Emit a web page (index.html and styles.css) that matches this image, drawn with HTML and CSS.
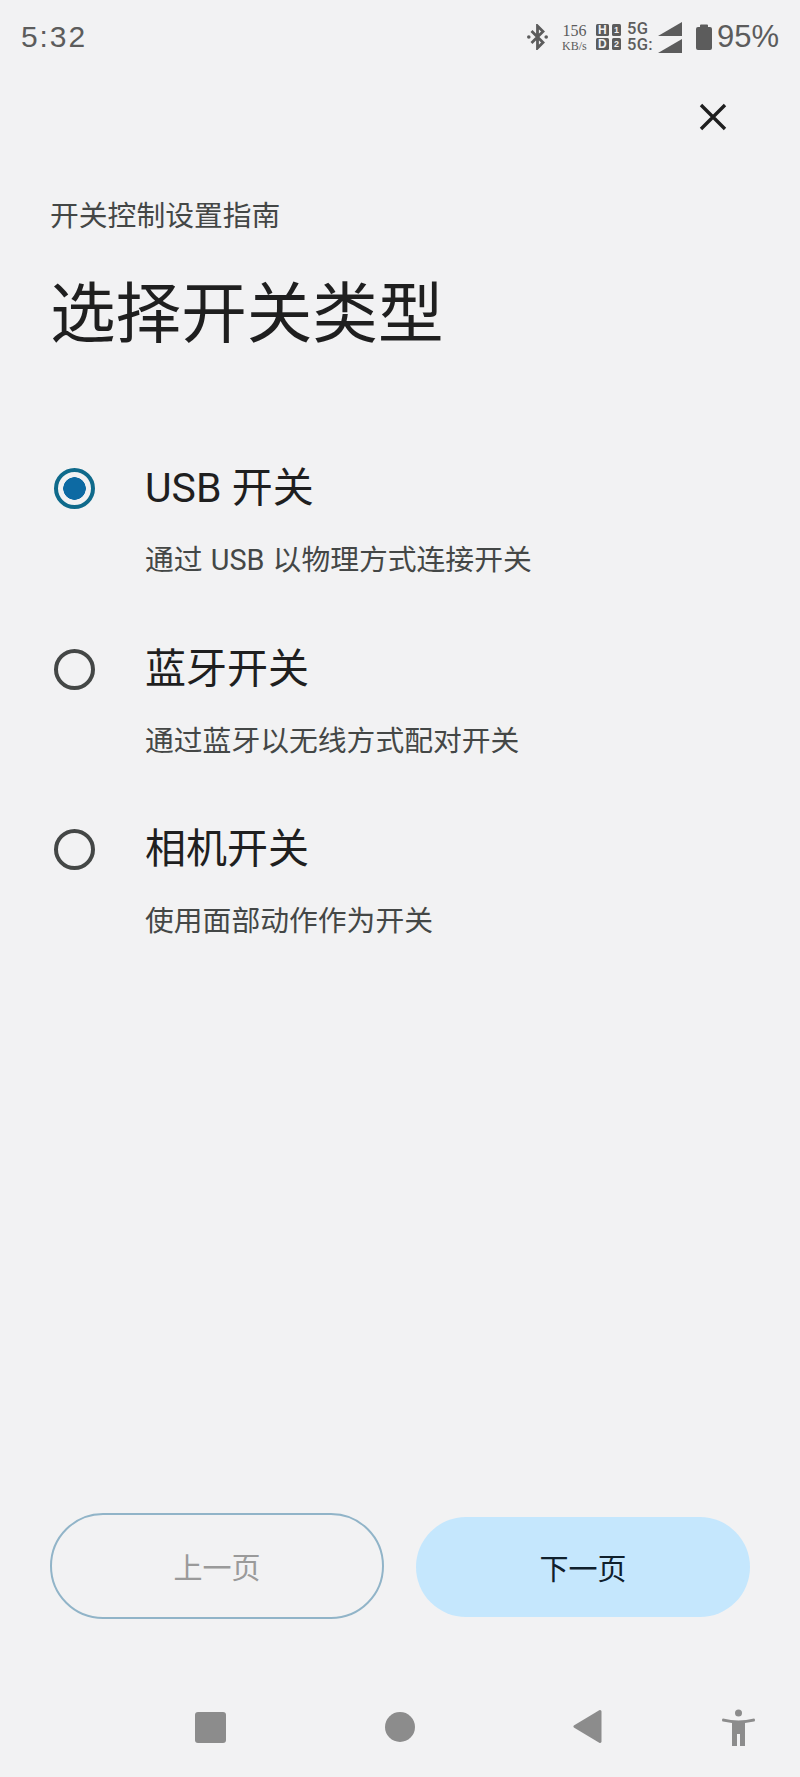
FILE: index.html
```html
<!DOCTYPE html>
<html lang="zh-CN">
<head>
<meta charset="utf-8">
<title>开关控制设置指南</title>
<link rel="stylesheet" href="styles.css">
</head>
<body>
<div class="page">
  <header class="status">
    <span class="time">5:32</span>
    <div class="status-icons">
      <svg class="bt" viewBox="0 0 21 26"><path d="M4.500 7L16 18.500 10.500 24V2L16 7.500 4.500 19" stroke="#5c5c5c" stroke-width="2.800" fill="none"/><circle cx="1.800" cy="13" r="1.800" fill="#5c5c5c"/><circle cx="19.200" cy="13" r="1.800" fill="#5c5c5c"/></svg>
      <div class="speed"><span class="speed-num">156</span><span class="speed-unit">KB/s</span></div>
      <div class="sim">
        <span class="sim-box">H</span><span class="sim-box sim-small">1</span>
        <span class="sim-box">D</span><span class="sim-box sim-small">2</span>
      </div>
      <div class="net"><span>5G</span><span>5G:</span></div>
      <div class="signal">
        <svg viewBox="0 0 24 14"><path d="M0 14L24 0v14z" fill="#5c5c5c"/></svg>
        <svg viewBox="0 0 24 14"><path d="M0 14L24 0v14z" fill="#5c5c5c"/></svg>
      </div>
      <svg class="battery" viewBox="0 0 16 26"><path d="M4 3V1.500Q4 .5 5 .5h6q1 0 1 1V3h2q2 0 2 2v19q0 2-2 2H2q-2 0-2-2V5q0-2 2-2z" fill="#5c5c5c"/></svg>
      <span class="pct">95%</span>
    </div>
  </header>

  <div class="close-row">
    <svg class="close" viewBox="0 0 30 30"><path d="M3 3l24 24M27 3L3 27" stroke="#1f1f1f" stroke-width="3.400" fill="none"/></svg>
  </div>

  <main class="content">
    <p class="eyebrow">开关控制设置指南</p>
    <h1 class="title">选择开关类型</h1>
    <ul class="options">
      <li class="option">
        <span class="radio radio-on"></span>
        <div class="option-text">
          <span class="option-name">USB 开关</span>
          <span class="option-desc">通过 USB 以物理方式连接开关</span>
        </div>
      </li>
      <li class="option">
        <span class="radio"></span>
        <div class="option-text">
          <span class="option-name">蓝牙开关</span>
          <span class="option-desc">通过蓝牙以无线方式配对开关</span>
        </div>
      </li>
      <li class="option">
        <span class="radio"></span>
        <div class="option-text">
          <span class="option-name">相机开关</span>
          <span class="option-desc">使用面部动作作为开关</span>
        </div>
      </li>
    </ul>
  </main>

  <div class="actions">
    <button class="btn btn-prev" type="button">上一页</button>
    <button class="btn btn-next" type="button">下一页</button>
  </div>

  <nav class="navbar">
    <span class="nav-square"></span>
    <span class="nav-circle"></span>
    <svg class="nav-back" viewBox="0 0 30 35"><path d="M27 2.500L2 17.500 27 32.500z" fill="#8c8c8c" stroke="#8c8c8c" stroke-width="3" stroke-linejoin="round"/></svg>
    <svg class="nav-a11y" viewBox="0 0 33 37"><circle cx="16.500" cy="4" r="3.500" fill="#8c8c8c"/><path d="M1 9.500Q0 9.500 0 11t1 1.500l9 1.500V37h5V25h3v12h5V14l9-1.500q1 0 1-1.500t-1-1.500Q24 11.500 16.500 11.500T1 9.500z" fill="#8c8c8c"/></svg>
  </nav>
</div>
</body>
</html>
```
FILE: styles.css
```css
* { box-sizing: border-box; }
html, body { margin: 0; padding: 0; }
body {
  background: #f2f2f3;
  font-family: "Roboto", "Noto Sans CJK SC", sans-serif;
  color: #1f1f1f;
}
.page {
  width: 800px;
  height: 1777px;
  display: flex;
  flex-direction: column;
}
.status {
  height: 76px;
  padding: 21px 21px 0 21px;
  display: flex;
  justify-content: space-between;
  align-items: flex-start;
  color: #5c5c5c;
}
.time {
  font-family: "Liberation Sans", sans-serif;
  font-size: 30px;
  line-height: 32px;
  letter-spacing: 1.900px;
}
.status-icons {
  display: flex;
  align-items: center;
  height: 32px;
}
.bt { width: 21px; height: 26px; margin-right: 13px; }
.speed {
  display: flex;
  flex-direction: column;
  font-family: "Liberation Serif", serif;
  align-items: center;
  margin-right: 8px;
  width: 27px;
}
.speed-num { font-size: 16px; line-height: 17px; }
.speed-unit { font-size: 12px; line-height: 14px; }
.sim {
  display: grid;
  grid-template-columns: 13px 9px;
  grid-template-rows: 12px 12px;
  gap: 2px 3px;
  margin-right: 6px;
}
.sim-box {
  background: #5c5c5c;
  color: #f2f2f3;
  font-family: "Liberation Sans", sans-serif;
  font-size: 12px;
  font-weight: 700;
  line-height: 12px;
  text-align: center;
  border-radius: 1.500px;
}
.sim-small { font-size: 9px; }
.net {
  display: flex;
  flex-direction: column;
  font-family: "Roboto", sans-serif;
  font-size: 16.500px;
  line-height: 16px;
  letter-spacing: 0.300px;
  width: 32px;
  margin-right: -1px;
  white-space: nowrap;
  font-weight: 500;
}
.signal {
  display: flex;
  flex-direction: column;
  gap: 3px;
  margin-right: 14px;
}
.signal svg { display: block; width: 24px; height: 14px; }
.battery { width: 16px; height: 26px; margin-right: 5px; }
.pct {
  font-family: "Liberation Sans", sans-serif;
  font-size: 31px;
  line-height: 32px;
}
.close-row {
  display: flex;
  justify-content: flex-end;
  padding-right: 72px;
  height: 60px;
  padding-top: 26px;
}
.close { width: 30px; height: 30px; display: block; }
.content { flex: 1; padding: 0 50px; }
.eyebrow {
  margin: 0;
  padding-top: 60px;
  font-size: 28.800px;
  line-height: 40px;
  color: #444746;
}
.title {
  margin: 37px 0 0;
  font-size: 65.600px;
  font-weight: 400;
  line-height: 84px;
  color: #1f1f1f;
}
.options {
  list-style: none;
  margin: 0;
  padding: 111px 0 0 4px;
}
.option {
  display: flex;
  height: 180.500px;
}
.radio {
  flex: none;
  width: 41px;
  height: 41px;
  border: 4px solid #444746;
  border-radius: 50%;
}
.radio-on {
  border-color: #0f6a8b;
  background: radial-gradient(circle, #0d6aa3 0 11px, transparent 11.500px);
}
.option-text {
  display: flex;
  flex-direction: column;
  margin-left: 50px;
  margin-top: -7px;
}
.option-name {
  font-size: 41px;
  line-height: 54px;
  color: #1f1f1f;
}
.option-desc {
  margin-top: 26px;
  font-size: 28.800px;
  line-height: 38px;
  word-spacing: 1px;
  color: #444746;
}
.actions {
  display: flex;
  align-items: center;
  justify-content: space-between;
  padding: 0 50px;
  height: 106px;
}
.btn {
  width: 334px;
  border-radius: 53px;
  font-family: inherit;
  font-size: 29px;
  padding: 0;
}
.btn-prev {
  height: 106px;
  background: transparent;
  border: 2px solid #91b4c8;
  color: #9a9a9a;
}
.btn-next {
  height: 100px;
  margin-top: 2px;
  background: #c5e7fd;
  border: 0;
  color: #10202c;
}
.navbar {
  height: 158px;
  display: flex;
  align-items: flex-start;
  padding: 90px 0 0 195px;
}
.nav-square { width: 31px; height: 31px; background: #8c8c8c; border-radius: 3px; margin-top: 3px; }
.nav-circle { width: 30px; height: 30px; background: #8c8c8c; border-radius: 50%; margin: 3px 0 0 159px; }
.nav-back { width: 30px; height: 35px; margin-left: 158px; }
.nav-a11y { width: 33px; height: 37px; margin-left: 119px; }
```
